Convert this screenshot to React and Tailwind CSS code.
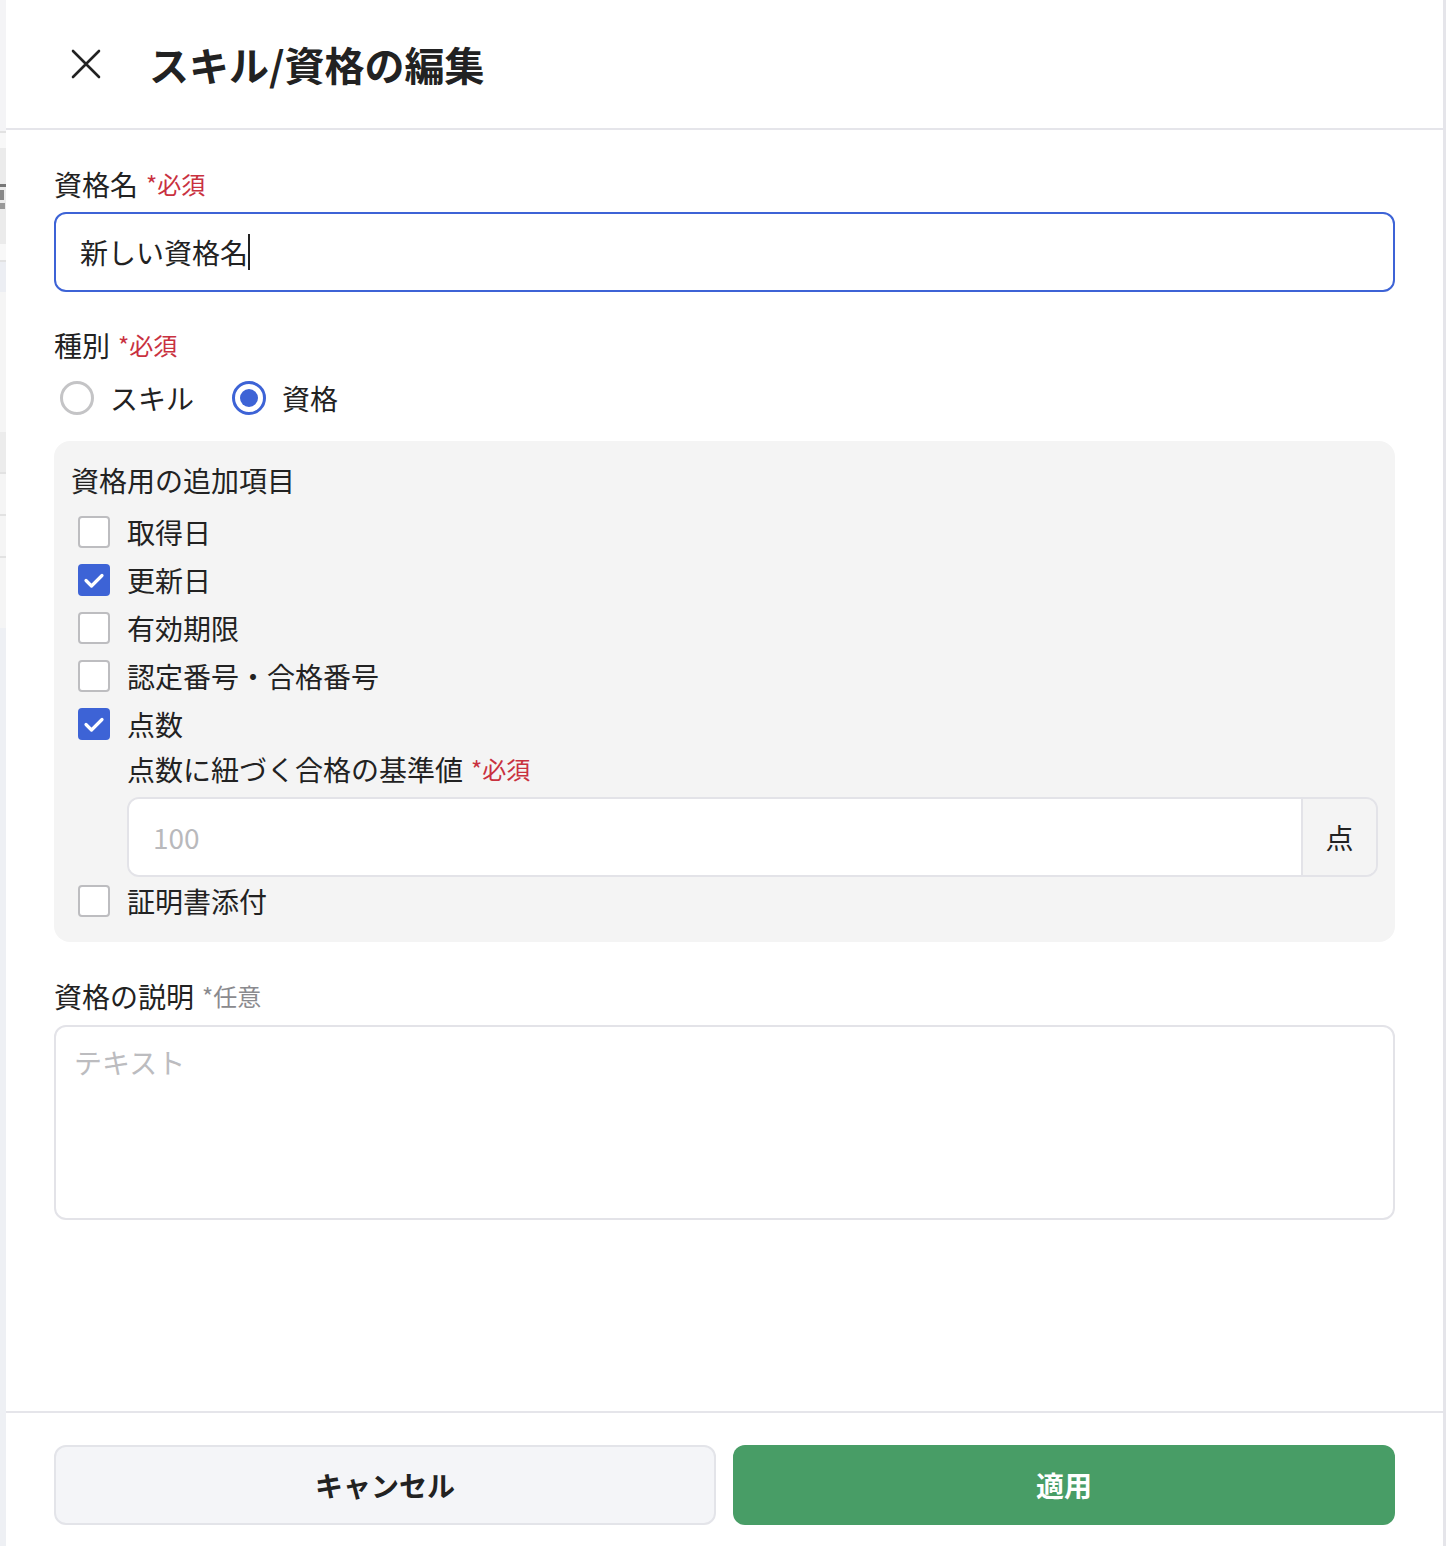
import React from 'react'

const font = { fontFamily: '"Noto Sans CJK JP", "Noto Sans", sans-serif' }

function Required() {
  return <span className="ml-[8px] text-[24px] text-[#c9313f]">*必須</span>
}

function Checkbox({ checked, label }) {
  return (
    <div className="flex items-center h-12 pl-[7px]">
      {checked ? (
        <span className="w-8 h-8 rounded-[4px] bg-[#3d63d6] flex items-center justify-center">
          <svg width="24" height="24" viewBox="0 0 24 24" fill="none" stroke="white" strokeWidth="3.2" strokeLinecap="round" strokeLinejoin="round">
            <path d="M4 12.5l5.5 5.5L20 7.5" />
          </svg>
        </span>
      ) : (
        <span className="w-8 h-8 rounded-[4px] border-2 border-[#bdbdc0] bg-white" />
      )}
      <span className="ml-[17px] text-[28px] leading-9 text-[#222]">{label}</span>
    </div>
  )
}

function Radio({ checked, label }) {
  return (
    <div className="flex items-center">
      {checked ? (
        <span className="w-[34px] h-[34px] rounded-full border-[3px] border-[#3d63d6] flex items-center justify-center bg-white">
          <span className="w-[18px] h-[18px] rounded-full bg-[#3d63d6]" />
        </span>
      ) : (
        <span className="w-[34px] h-[34px] rounded-full border-[3px] border-[#c4c4c6] bg-white" />
      )}
      <span className="ml-4 text-[28px] leading-9 text-[#222]">{label}</span>
    </div>
  )
}

export default function App() {
  return (
    <div className="flex w-[1446px] h-[1546px] bg-white" style={font}>
      <div className="w-[6px] flex flex-col bg-[#f4f4f6]">
        <div className="h-[131px]" />
        <div className="h-[2px] bg-[#e2e2e2]" />
        <div className="h-[15px] bg-[#f8f8f8]" />
        <div className="h-[96px] bg-[#ebebeb] flex flex-col justify-center gap-[3px]">
          <div className="h-[3px] bg-[#777]" />
          <div className="h-[10px] w-[4px] bg-[#888]" />
          <div className="h-[6px] w-[5px] bg-[#999]" />
        </div>
        <div className="h-[16px] bg-[#f8f8f8]" />
        <div className="h-[2px] bg-[#e2e2e2]" />
        <div className="h-[30px] bg-[#eceef3]" />
        <div className="h-[140px] bg-[#f5f5f5]" />
        <div className="h-[40px] bg-[#ececec]" />
        <div className="h-[2px] bg-[#e2e2e2]" />
        <div className="h-[40px] bg-[#f5f5f5]" />
        <div className="h-[2px] bg-[#e2e2e2]" />
        <div className="h-[40px] bg-[#f5f5f5]" />
        <div className="h-[2px] bg-[#e2e2e2]" />
        <div className="h-[70px] bg-[#f5f5f5]" />
        <div className="flex-1 bg-[#eef0f4]" />
      </div>

      <div className="flex-1 flex flex-col border-r-[3px] border-[#e5e5ea]">
        <header className="h-[130px] flex items-center pl-[65px] border-b-2 border-[#e5e5ea]">
          <svg width="30" height="30" viewBox="0 0 30 30" stroke="#222" strokeWidth="2.6" strokeLinecap="round">
            <path d="M2 2l26 26M28 2L2 28" />
          </svg>
          <h1 className="ml-[48px] text-[40px] font-bold text-[#222] leading-none">スキル/資格の編集</h1>
        </header>

        <div className="flex-1 flex flex-col px-12 pt-9">
          <label className="flex items-center h-9 text-[28px] text-[#222]">
            資格名<Required />
          </label>
          <div className="mt-[10px] h-20 rounded-xl border-2 border-[#3d63d6] flex items-center px-6">
            <span className="text-[28px] text-[#222]">新しい資格名</span>
            <span className="w-[2px] h-9 bg-[#222]" />
          </div>

          <label className="mt-[35px] flex items-center h-9 text-[28px] text-[#222]">
            種別<Required />
          </label>
          <div className="mt-[17px] flex items-center gap-[38px] pl-[6px]">
            <Radio label="スキル" />
            <Radio checked label="資格" />
          </div>

          <div className="mt-[25px] rounded-2xl bg-[#f4f4f4] pt-[21px] pb-[17px] px-[17px]">
            <p className="text-[28px] leading-9 text-[#222]">資格用の追加項目</p>
            <div className="mt-[10px]">
              <Checkbox label="取得日" />
              <Checkbox checked label="更新日" />
              <Checkbox label="有効期限" />
              <Checkbox label="認定番号・合格番号" />
              <Checkbox checked label="点数" />
              <div className="pl-[56px]">
                <p className="mt-[3px] flex items-center h-9 text-[28px] text-[#222]">
                  点数に紐づく合格の基準値<Required />
                </p>
                <div className="mt-[10px] flex h-20 rounded-xl border-2 border-[#e3e3e8] overflow-hidden">
                  <div className="flex-1 bg-white flex items-center px-6">
                    <span className="text-[28px] text-[#b9b9bc]">100</span>
                  </div>
                  <div className="w-[75px] border-l-2 border-[#e3e3e8] bg-[#f4f4f4] flex items-center justify-center">
                    <span className="text-[28px] text-[#222]">点</span>
                  </div>
                </div>
              </div>
              <Checkbox label="証明書添付" />
            </div>
          </div>

          <label className="mt-9 flex items-center h-9 text-[28px] text-[#222]">
            資格の説明<span className="ml-[8px] text-[24px] text-[#8a8a8e]">*任意</span>
          </label>
          <div className="mt-[11px] h-[195px] rounded-xl border-2 border-[#e3e3e8] px-[18px] pt-[14px]">
            <span className="text-[28px] text-[#bcbcbf]">テキスト</span>
          </div>
        </div>

        <footer className="h-[135px] border-t-2 border-[#e5e5ea] px-12 pt-8 grid grid-cols-2 gap-[17px]">
          <button className="h-20 rounded-xl border-2 border-[#e3e4e9] bg-[#f4f5f8] text-[28px] font-bold text-[#222]">
            キャンセル
          </button>
          <button className="h-20 rounded-xl bg-[#489d66] text-[28px] font-bold text-white">
            適用
          </button>
        </footer>
      </div>
    </div>
  )
}
